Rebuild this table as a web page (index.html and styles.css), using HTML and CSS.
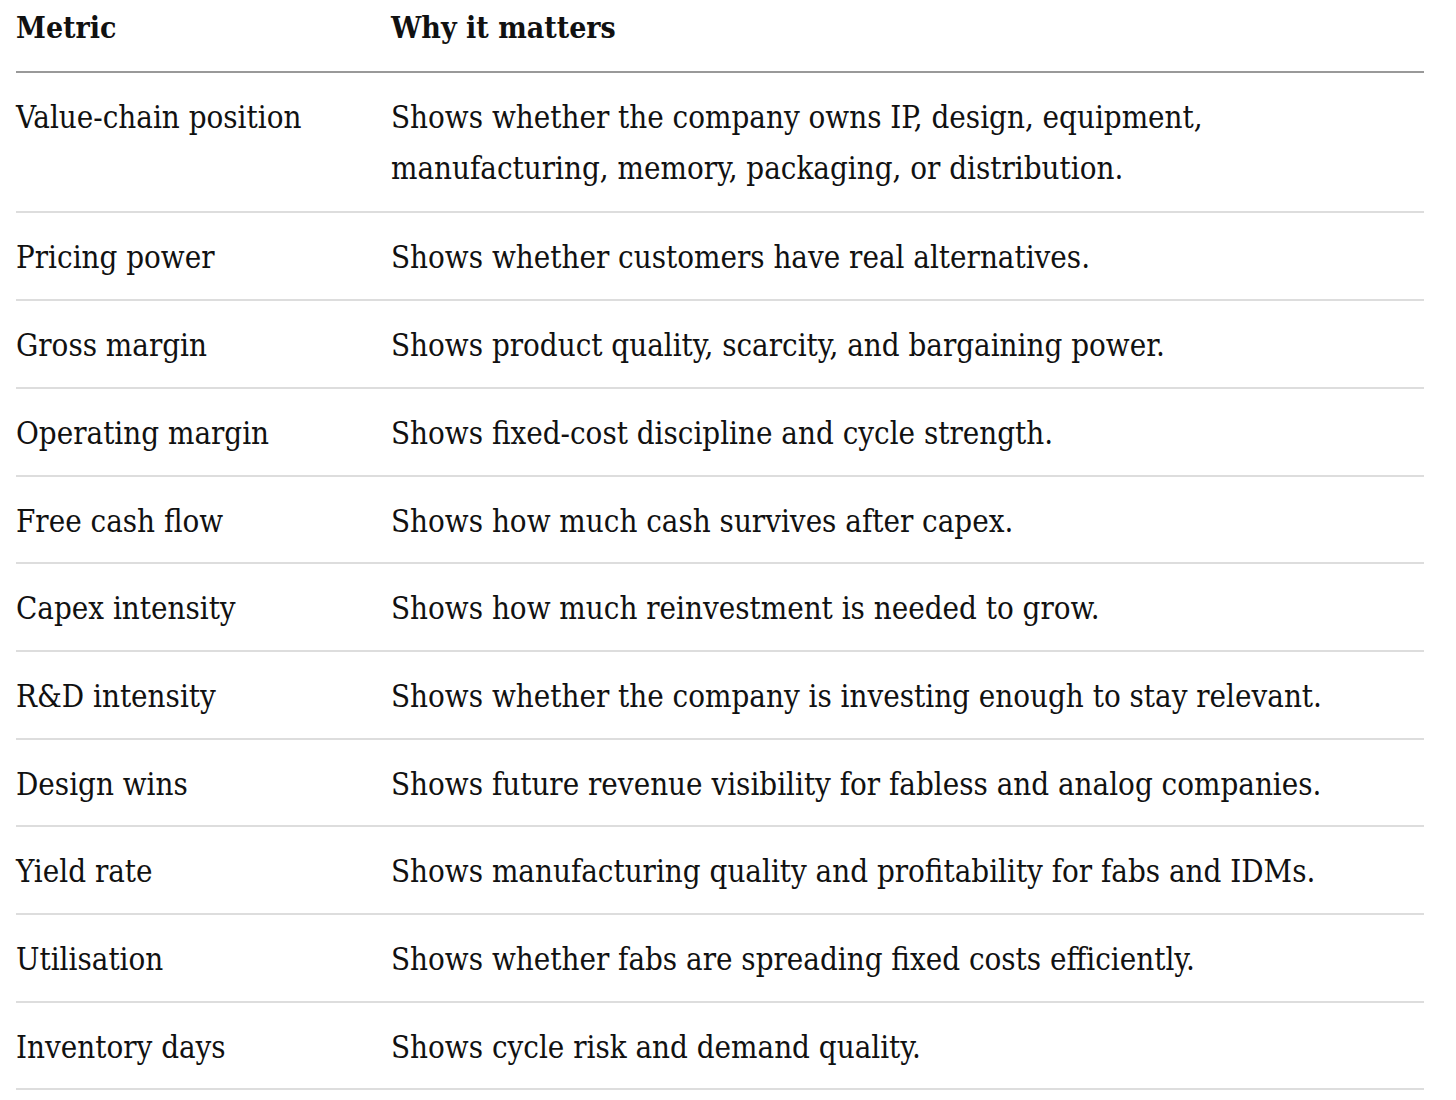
FILE: index.html
```html
<!DOCTYPE html>
<html lang="en">
<head>
<meta charset="utf-8">
<title>Metrics</title>
<link rel="stylesheet" href="styles.css">
</head>
<body>
<table class="metrics">
  <thead>
    <tr><th class="col-metric">Metric</th><th>Why it matters</th></tr>
  </thead>
  <tbody>
    <tr class="row-first"><td>Value-chain position</td><td>Shows whether the company owns IP, design, equipment,<br>manufacturing, memory, packaging, or distribution.</td></tr>
    <tr><td>Pricing power</td><td>Shows whether customers have real alternatives.</td></tr>
    <tr><td>Gross margin</td><td>Shows product quality, scarcity, and bargaining power.</td></tr>
    <tr><td>Operating margin</td><td>Shows fixed-cost discipline and cycle strength.</td></tr>
    <tr><td>Free cash flow</td><td>Shows how much cash survives after capex.</td></tr>
    <tr><td>Capex intensity</td><td>Shows how much reinvestment is needed to grow.</td></tr>
    <tr><td>R&amp;D intensity</td><td>Shows whether the company is investing enough to stay relevant.</td></tr>
    <tr><td>Design wins</td><td>Shows future revenue visibility for fabless and analog companies.</td></tr>
    <tr><td>Yield rate</td><td>Shows manufacturing quality and profitability for fabs and IDMs.</td></tr>
    <tr><td>Utilisation</td><td>Shows whether fabs are spreading fixed costs efficiently.</td></tr>
    <tr><td>Inventory days</td><td>Shows cycle risk and demand quality.</td></tr>
  </tbody>
</table>
</body>
</html>
```
FILE: styles.css
```css
html, body {
  margin: 0;
  padding: 0;
  background: #ffffff;
}
body {
  padding: 0 32px 0 16px;
  font-family: "DejaVu Serif Condensed", "DejaVu Serif", "Liberation Serif", serif;
  font-stretch: condensed;
  color: #111111;
}
.metrics {
  width: 100%;
  border-collapse: collapse;
  font-size: 31px;
  line-height: 50.7px;
}
.metrics th {
  text-align: left;
  font-size: 30px;
  font-weight: 700;
  padding: 3px 0 17.3px 0;
  border-bottom: 2px solid #999999;
}
.metrics th.col-metric {
  width: 375px;
}
.metrics td {
  padding: 19px 0 16px 0;
  vertical-align: top;
  border-bottom: 2px solid #dddddd;
  font-weight: 400;
}
.metrics .row-first td {
  padding-bottom: 18px;
}
```
